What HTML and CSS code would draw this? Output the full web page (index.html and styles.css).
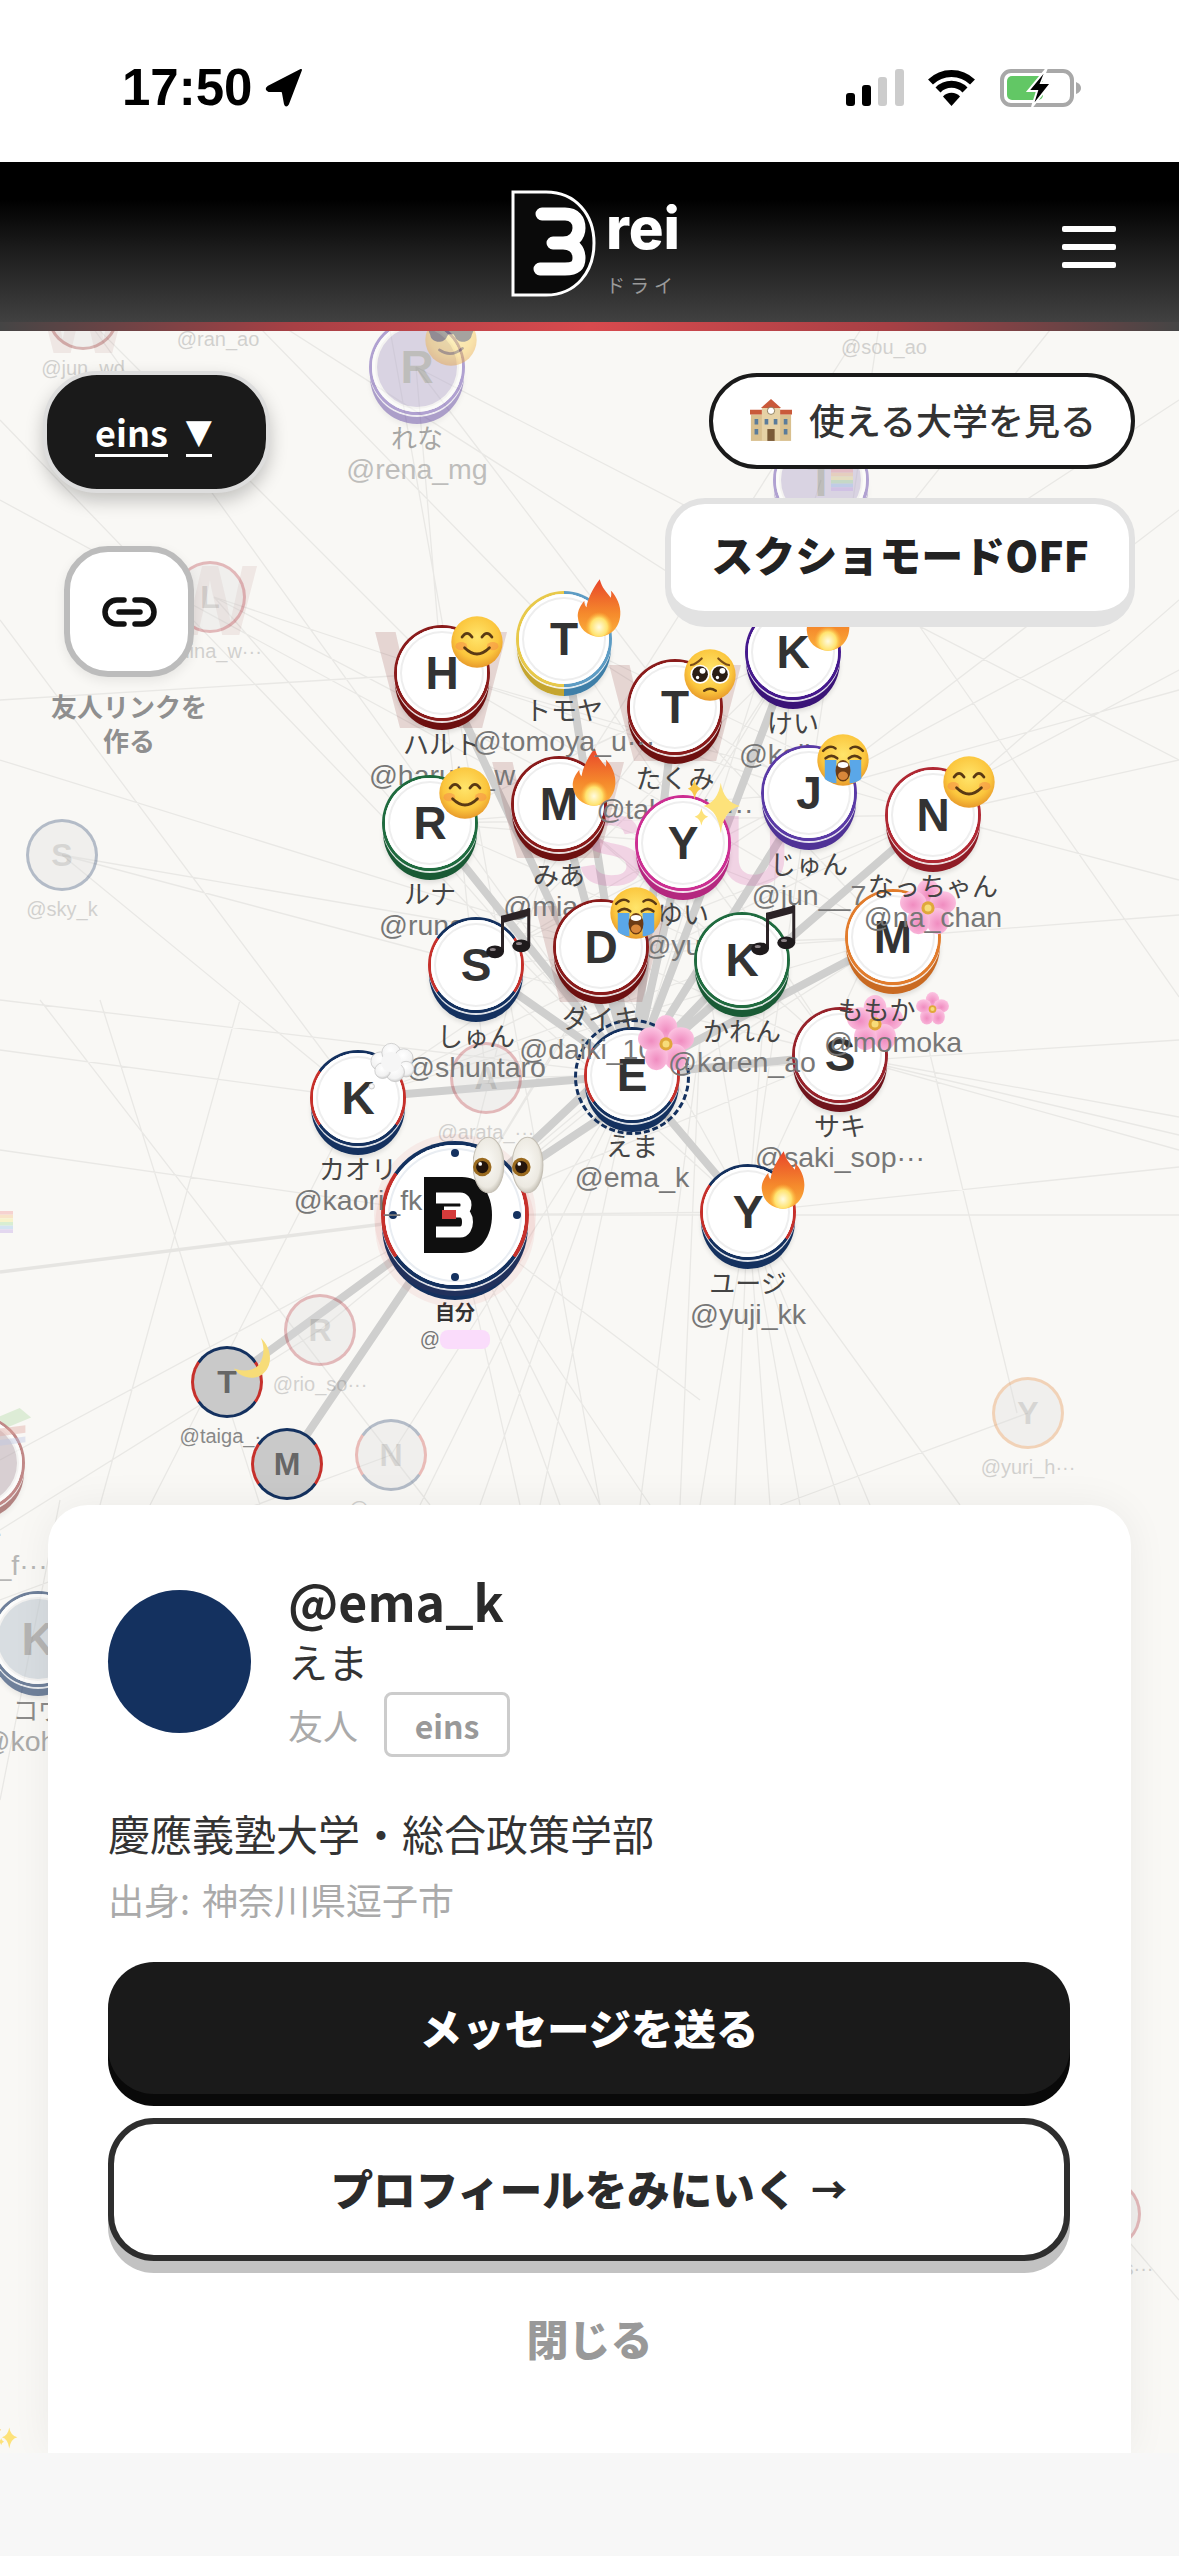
FILE: index.html
```html
<!DOCTYPE html>
<html lang="ja">
<head>
    <meta charset="utf-8">
    <title>Drei</title>
    <link rel="stylesheet" href="styles.css">
</head>
<body>
    <!-- emoji drawn once, used by every node -->
    <svg class="defs" width="0" height="0">
        <defs>
            <radialGradient id="faceGrad" cx="50%" cy="40%" r="60%">
                <stop offset="0" stop-color="#ffe56b"/>
                <stop offset=".7" stop-color="#fbc63d"/>
                <stop offset="1" stop-color="#e89a2b"/>
            </radialGradient>
            <linearGradient id="flameGrad" x1="0" y1="0" x2="0" y2="1">
                <stop offset="0" stop-color="#e8452a"/>
                <stop offset=".6" stop-color="#f58a2c"/>
                <stop offset="1" stop-color="#fbb13c"/>
            </linearGradient>
            <radialGradient id="flameCore" cx="50%" cy="72%" r="45%">
                <stop offset="0" stop-color="#fffbe0"/>
                <stop offset=".6" stop-color="#ffe36e"/>
                <stop offset="1" stop-color="#ffb83c" stop-opacity="0"/>
            </radialGradient>
            <radialGradient id="petalGrad" cx="50%" cy="60%" r="60%">
                <stop offset="0" stop-color="#f08cc0"/>
                <stop offset="1" stop-color="#fcc4e2"/>
            </radialGradient>
            <radialGradient id="eyeGrad" cx="45%" cy="45%" r="60%">
                <stop offset="0" stop-color="#fbfaf6"/>
                <stop offset=".75" stop-color="#ece9e1"/>
                <stop offset="1" stop-color="#bdb8ac"/>
            </radialGradient>
            <radialGradient id="cloudGrad" cx="45%" cy="35%" r="70%">
                <stop offset="0" stop-color="#ffffff"/>
                <stop offset=".7" stop-color="#f2f2f2"/>
                <stop offset="1" stop-color="#c4c4c4"/>
            </radialGradient>
            <symbol id="e-smile" viewBox="0 0 64 64">
                <circle cx="32" cy="32" r="31" fill="url(#faceGrad)"/>
                <ellipse cx="13" cy="37" rx="7" ry="5" fill="#f58a4a" opacity=".5"/>
                <ellipse cx="51" cy="37" rx="7" ry="5" fill="#f58a4a" opacity=".5"/>
                <path d="M14 26q6-9 12 0M38 26q6-9 12 0" fill="none" stroke="#5a3a14" stroke-width="3.4" stroke-linecap="round"/>
                <path d="M17 39q15 15 30 0" fill="none" stroke="#5a3a14" stroke-width="3.4" stroke-linecap="round"/>
            </symbol>
            <symbol id="e-plead" viewBox="0 0 64 64">
                <circle cx="32" cy="32" r="31" fill="url(#faceGrad)"/>
                <path d="M9 20q6-1 13-8M55 20q-6-1-13-8" fill="none" stroke="#7a4d18" stroke-width="2.6" stroke-linecap="round"/>
                <circle cx="20" cy="31" r="11.5" fill="#fff"/>
                <circle cx="44" cy="31" r="11.5" fill="#fff"/>
                <circle cx="20" cy="31" r="9.5" fill="#2b1d14"/>
                <circle cx="44" cy="31" r="9.5" fill="#2b1d14"/>
                <circle cx="23" cy="27" r="3.6" fill="#fff"/>
                <circle cx="47" cy="27" r="3.6" fill="#fff"/>
                <circle cx="17" cy="35" r="2" fill="#fff"/>
                <circle cx="41" cy="35" r="2" fill="#fff"/>
                <path d="M25 51q7-5 14 0" fill="none" stroke="#5a3a14" stroke-width="3" stroke-linecap="round"/>
            </symbol>
            <symbol id="e-sob" viewBox="0 0 64 64">
                <circle cx="32" cy="32" r="31" fill="url(#faceGrad)"/>
                <path d="M8 21q8-8 15-3M56 21q-8-8-15-3" fill="none" stroke="#5a3a14" stroke-width="3" stroke-linecap="round"/>
                <path d="M11 30q7-6 14 0M39 30q7-6 14 0" fill="none" stroke="#5a3a14" stroke-width="3.2" stroke-linecap="round"/>
                <path d="M10 32h14v28q-8 0-14-5zM40 32h14v23q-6 5-14 5z" fill="#5aa7e8"/>
                <ellipse cx="32" cy="45" rx="9" ry="13" fill="#6b3b15"/>
                <ellipse cx="32" cy="38" rx="6.5" ry="3.6" fill="#fff"/>
                <ellipse cx="32" cy="51" rx="6" ry="5" fill="#d9873a"/>
            </symbol>
            <symbol id="e-cool" viewBox="0 0 64 64">
                <circle cx="32" cy="32" r="31" fill="url(#faceGrad)"/>
                <path d="M5 21h54l-2 5c-1 10-17 11-20 2l-2-3h-6l-2 3c-3 9-19 8-20-2z" fill="#2a2320"/>
                <path d="M18 44q14 10 28-2" fill="none" stroke="#5a3a14" stroke-width="3.2" stroke-linecap="round"/>
            </symbol>
            <symbol id="e-fire" viewBox="0 0 64 80">
                <path d="M33 1c3 12 9 17 15 25 1-4 1-7 0-10 8 8 14 21 13 33C60 68 47 79 32 79 16 79 4 68 3 51c0-8 4-15 9-21 0 4 1 7 3 9C17 26 24 13 33 1z" fill="url(#flameGrad)"/>
                <ellipse cx="32" cy="56" rx="21" ry="23" fill="url(#flameCore)"/>
            </symbol>
            <symbol id="e-notes" viewBox="0 0 64 72">
                <path d="M21 13 58 3v10L21 23z" fill="#2b2326"/>
                <rect x="20" y="13" width="4" height="48" fill="#2b2326"/>
                <rect x="55" y="3" width="4" height="50" fill="#2b2326"/>
                <ellipse cx="12" cy="61" rx="12" ry="8.5" fill="#1e1a1c"/>
                <ellipse cx="47" cy="53" rx="12" ry="8.5" fill="#1e1a1c"/>
                <ellipse cx="9" cy="58" rx="4" ry="2" fill="#8d8488"/>
                <ellipse cx="44" cy="50" rx="4" ry="2" fill="#8d8488"/>
            </symbol>
            <symbol id="e-spark" viewBox="0 0 64 64">
                <path d="M40 6q3 20 20 24q-17 4-20 28q-3-24-18-28q15-4 18-24z" fill="#fde27a"/>
                <path d="M13 2q1 8 7 10q-6 2-7 11q-1-9-7-11q6-2 7-11z" fill="#f9c949"/>
                <path d="M20 32q1 7 7 9q-6 2-7 9q-1-7-7-9q6-2 7-9z" fill="#fde27a"/>
            </symbol>
            <symbol id="e-blossom" viewBox="0 0 64 64">
                <g fill="url(#petalGrad)">
                    <ellipse cx="32" cy="15" rx="13" ry="15"/>
                    <ellipse cx="49" cy="27" rx="15" ry="13"/>
                    <ellipse cx="43" cy="48" rx="13" ry="15"/>
                    <ellipse cx="21" cy="48" rx="13" ry="15"/>
                    <ellipse cx="15" cy="27" rx="15" ry="13"/>
                </g>
                <circle cx="32" cy="33" r="7.5" fill="#e0a83a"/>
                <circle cx="32" cy="33" r="4" fill="#f7dc7a"/>
            </symbol>
            <symbol id="e-cloud" viewBox="0 0 64 60">
                <g fill="url(#cloudGrad)" stroke="#c8c8c8" stroke-width="1">
                    <circle cx="6" cy="56" r="3.5"/>
                    <circle cx="17" cy="24" r="12"/>
                    <circle cx="31" cy="13" r="12"/>
                    <circle cx="47" cy="20" r="12"/>
                    <circle cx="50" cy="34" r="10"/>
                    <circle cx="36" cy="38" r="12"/>
                    <circle cx="20" cy="36" r="10"/>
                </g>
                <circle cx="31" cy="25" r="13" fill="#f6f6f6"/>
            </symbol>
            <symbol id="e-eyes" viewBox="0 0 70 56">
                <ellipse cx="15" cy="28" rx="15" ry="27" fill="url(#eyeGrad)" stroke="#c4bfb4"/>
                <ellipse cx="53" cy="28" rx="15" ry="27" fill="url(#eyeGrad)" stroke="#c4bfb4"/>
                <circle cx="9" cy="30" r="9" fill="#9a6a1f"/>
                <circle cx="47" cy="30" r="9" fill="#9a6a1f"/>
                <circle cx="9" cy="30" r="6" fill="#24150c"/>
                <circle cx="47" cy="30" r="6" fill="#24150c"/>
                <circle cx="7" cy="27" r="1.8" fill="#fff"/>
                <circle cx="45" cy="27" r="1.8" fill="#fff"/>
            </symbol>
            <symbol id="e-moon" viewBox="0 0 48 48">
                <path d="M32 1C45 13 46 34 33 43 22 50 8 46 1 36c11 4 23 3 29-5 6-9 6-20 2-30z" fill="#f7dc78"/>
            </symbol>
            <symbol id="e-school" viewBox="0 0 46 50">
                <rect x="1" y="20" width="44" height="29" fill="#d9c08f"/>
                <rect x="13" y="12" width="20" height="37" fill="#e6d2a6"/>
                <path d="M0 20h13v-5H0zM33 15h13v5H33zM12 13 23 3l11 10z" fill="#c9593a"/>
                <circle cx="23" cy="16" r="4" fill="#fff" stroke="#8a7a58"/>
                <path d="M5 25h4v6H5zM5 36h4v6H5zM37 25h4v6h-4zM37 36h4v6h-4zM16 25h4v6h-4zM26 25h4v6h-4z" fill="#5b7c9a"/>
                <rect x="19" y="36" width="8" height="13" fill="#7a5a38"/>
            </symbol>
            <symbol id="e-flag" viewBox="0 0 30 30">
                <rect width="30" height="5" fill="#f29a9a"/>
                <rect y="5" width="30" height="5" fill="#f7c88a"/>
                <rect y="10" width="30" height="5" fill="#f5ee8f"/>
                <rect y="15" width="30" height="5" fill="#a8e0a0"/>
                <rect y="20" width="30" height="5" fill="#9cc4ee"/>
                <rect y="25" width="30" height="5" fill="#c4a8e8"/>
            </symbol>
            <symbol id="e-books" viewBox="0 0 40 46">
                <path d="M2 12 26 2l12 10-24 10z" fill="#b5dca8"/>
                <path d="M2 24l30-4v8L2 32z" fill="#e0a59d"/>
                <path d="M2 36l30-4v6L2 42z" fill="#bcc6e4"/>
            </symbol>
        </defs>
    </svg>

    <header class="status-bar">
        <div class="status-left">
            <span class="clock">17:50</span>
            <svg class="loc-arrow" viewBox="0 0 38 39"><path d="M36 2 3 19q-3 2 1 4l12 0q2 0 2 2l2 11q1 3 3 0z" fill="#000" stroke="#000" stroke-width="2" stroke-linejoin="round"/></svg>
        </div>
        <div class="status-right">
            <svg class="signal" viewBox="0 0 58 37">
                <rect x="0" y="24" width="9" height="13" rx="3" fill="#000"/>
                <rect x="16" y="16" width="9" height="21" rx="3" fill="#000"/>
                <rect x="32" y="8" width="9" height="29" rx="3" fill="#ccc"/>
                <rect x="49" y="0" width="9" height="37" rx="3" fill="#ccc"/>
            </svg>
            <svg class="wifi" viewBox="0 0 51 37">
                <path d="M4.500 13A30 30 0 0 1 46.500 13M12 21A19 19 0 0 1 39 21" fill="none" stroke="#000" stroke-width="7"/>
                <path d="M25.500 37 17 27.500A11.500 11.500 0 0 1 34 27.500z" fill="#000"/>
            </svg>
            <svg class="battery" viewBox="0 0 81 39">
                <rect x="2" y="3" width="70" height="34" rx="9" fill="none" stroke="#a8a8a8" stroke-width="4"/>
                <path d="M76 14q5 2 5 6t-5 6z" fill="#a8a8a8"/>
                <rect x="7" y="8" width="36" height="24" rx="5" fill="#62c765"/>
                <path d="M47 0 28 23h9l-5 16 19-24h-10z" fill="#000" stroke="#fff" stroke-width="2"/>
            </svg>
        </div>
    </header>

    <nav class="app-header">
        <div class="brand">
            <svg class="brand-mark" viewBox="0 0 85 107">
                <path d="M2 2H35C65 2 83 25 83 53 83 82 65 105 35 105H2z" fill="#0a0a0a" stroke="#fff" stroke-width="3"/>
                <path d="M31 24H54C64 24 68 30 68 38 68 46 62 53 52 53H42M52 53C63 53 68 60 68 68 68 77 62 79 54 79H29" fill="none" stroke="#fff" stroke-width="13" stroke-linecap="round" stroke-linejoin="round"/>
            </svg>
            <div class="brand-text">
                <span class="brand-name">rei</span>
                <span class="brand-kana">ドライ</span>
            </div>
        </div>
        <div class="menu-btn"><span></span><span></span><span></span></div>
    </nav>

    <main class="map">
        <div class="canvas">
            <svg class="edges" width="1179" height="2556" viewBox="0 0 1179 2556">
                <path class="edge-thin" d="M83 314 632 1075M83 314 442 673M218 285 564 639M218 285 793 652M416 367 442 673M416 367 675 707M416 367 1179 760M821 480 632 1075M884 293 559 804M884 293 809 793M214 597 683 843M214 597 442 673M214 597 632 1075M62 855 476 965M62 855 601 947M62 855 358 1098M0 420 632 1075M0 500 559 804M0 700 442 673M0 620 358 1098M0 760 601 947M0 1000 632 1075M0 1150 455 1215M0 1050 358 1098M0 1460 455 1215M150 1505 358 1098M0 1530 320 1330M0 1600 391 1455M100 1000 260 1505M40 1000 430 1505M240 1000 100 1505M390 330 600 1505M933 815 1179 880M933 815 1179 760M933 815 1179 600M809 793 1179 690M969 782 1179 670M920 627 1179 997M929 1050 1017 1413M840 1055 1179 1117M840 1055 1179 1135M840 1055 1179 1150M893 937 1179 915M748 1212 1179 1167M748 1212 700 1505M748 1212 735 1505M748 1212 770 1505M748 1212 800 1505M748 1212 840 1505M748 1212 870 1505M748 1212 960 1505M1028 1413 780 1505M632 1075 1179 1040M1179 400 793 652M1179 510 809 793M1110 630 793 800M1050 330 793 652M455 1215 520 1505M455 1215 560 1505M455 1215 600 1505M455 1215 650 1505M455 1215 700 1400M455 1215 1179 1215M632 1075 420 1505M632 1075 480 1505M632 1075 540 1505M700 1040 640 1505M700 1040 680 1505M442 673 933 815M442 673 893 937M442 673 809 793M564 639 933 815M564 639 840 1055M564 639 809 793M430 823 933 815M430 823 809 793M430 823 742 960M476 965 893 937M476 965 809 793M476 965 840 1055M559 804 893 937M559 804 742 960M559 804 840 1055M601 947 933 815M601 947 893 937M601 947 840 1055M675 707 476 965M675 707 893 937M675 707 430 823M683 843 476 965M683 843 840 1055M683 843 430 823M793 652 430 823M793 652 476 965M793 652 601 947M793 652 748 1212M809 793 748 1212M933 815 748 1212M933 815 358 1098M893 937 358 1098M809 793 358 1098M742 960 358 1098M683 843 748 1212M601 947 748 1212M476 965 748 1212M559 804 455 1215M683 843 455 1215M793 652 455 1215M933 815 455 1215M893 937 455 1215M840 1055 455 1215M748 1212 455 1215M486 1078 632 1075M486 1078 442 673M320 1330 632 1075M391 1455 632 1075M1105 2214 1179 2300M0 1800 60 1500"/>
                <path class="edge-faint" d="M0 1272 455 1215"/>
                <path class="edge-thick" d="M442 673 632 1075M564 639 632 1075M675 707 632 1075M793 652 632 1075M430 823 632 1075M559 804 632 1075M683 843 632 1075M809 793 632 1075M933 815 632 1075M476 965 632 1075M601 947 632 1075M742 960 632 1075M893 937 632 1075M840 1055 632 1075M358 1098 632 1075M748 1212 632 1075M455 1215 620 1060M455 1215 650 1085M455 1215 227 1382M455 1215 287 1464"/>
            </svg>

            <span class="crest crest-w" style="left:441px;top:680px">W</span>
            <span class="crest crest-w" style="left:675px;top:713px">W</span>
            <span class="crest crest-w" style="left:558px;top:810px">W</span>
            <span class="crest crest-w" style="left:601px;top:954px">W</span>
            <span class="crest crest-w crest-small" style="left:210px;top:600px">W</span>
            <span class="crest crest-w crest-small" style="left:83px;top:318px">W</span>
            <span class="crest crest-sou" style="left:683px;top:850px">SOU</span>

            <!-- people outside the current range -->
            <div class="node node-small node-faded ring-maroon" style="left:83px;top:314px"><span class="disc">J</span><span class="handle">@jun_wd</span></div>
            <div class="node node-small node-faded ring-navy" style="left:218px;top:285px"><span class="disc">R</span><span class="handle">@ran_ao</span></div>
            <div class="node node-small node-faded ring-navy" style="left:884px;top:293px"><span class="disc">S</span><span class="handle">@sou_ao</span></div>
            <div class="node node-rena ring-violet" style="left:417px;top:367px"><span class="disc">R</span><span class="name">れな</span><span class="handle">@rena_mg</span></div>
            <svg class="emoji emoji-faded size-52" style="left:451px;top:340px"><use href="#e-cool"/></svg>
            <div class="node node-rena ring-violet" style="left:821px;top:480px"><span class="disc">T</span></div>
            <svg class="emoji emoji-faded size-flag" style="left:842px;top:480px"><use href="#e-flag"/></svg>
            <div class="node node-small node-faded ring-crimson" style="left:210px;top:597px"><span class="disc">L</span><span class="handle">@hina_w···</span></div>
            <div class="node node-small node-faded ring-navy" style="left:62px;top:855px"><span class="disc">S</span><span class="handle">@sky_k</span></div>
            <div class="node node-small node-faded ring-crimson" style="left:486px;top:1078px"><span class="disc">A</span><span class="handle">@arata_···</span></div>
            <div class="node node-small node-faded ring-crimson" style="left:320px;top:1330px"><span class="disc">R</span><span class="handle">@rio_so···</span></div>
            <div class="node node-small node-faded ring-navy-red" style="left:391px;top:1455px"><span class="disc">N</span><span class="handle">@nao_···</span></div>
            <div class="node node-small node-faded ring-orange" style="left:1028px;top:1413px"><span class="disc">Y</span><span class="handle">@yuri_h···</span></div>
            <div class="node node-small node-faded ring-crimson" style="left:1105px;top:2214px"><span class="disc">M</span><span class="handle">@miki_s···</span></div>
            <div class="node node-small node-faded ring-navy" style="left:-36px;top:1318px"><span class="disc">A</span><span class="handle">@saint</span></div>
            <div class="node node-faded node-riki ring-maroon" style="left:-23px;top:1463px"><span class="disc">R</span><span class="name">リキ</span><span class="handle">@ryuki_f···</span></div>
            <svg class="emoji emoji-faded size-books" style="left:14px;top:1428px"><use href="#e-books"/></svg>
            <div class="node node-faded node-kou ring-navy" style="left:38px;top:1639px"><span class="disc">K</span><span class="name">コウ</span><span class="handle">@kohei_</span></div>
            <svg class="emoji emoji-faded size-flag" style="left:2px;top:1222px"><use href="#e-flag"/></svg>
            <svg class="emoji size-24" style="left:6px;top:2438px"><use href="#e-spark"/></svg>

            <!-- main cluster, later nodes paint over earlier ones -->
            <div class="node node-self ring-navy-red" style="left:455px;top:1215px">
                <span class="disc">
                    <i class="tick tick-top"></i><i class="tick tick-right"></i><i class="tick tick-bottom"></i><i class="tick tick-left"></i>
                    <svg class="self-logo" viewBox="0 0 68 76">
                        <path d="M0 0H38C56 0 68 16 68 38 68 60 56 76 38 76H0z" fill="#0f0f0f"/>
                        <path d="M12 21H36C44 21 44 35 36 35H20M36 35C46 35 46 55 36 55H12" fill="none" stroke="#fff" stroke-width="11" stroke-linejoin="round"/>
                        <rect x="18" y="33" width="14" height="9" fill="#d43b3b"/>
                    </svg>
                </span>
                <span class="name">自分</span>
                <span class="handle">@<i class="blur-name"></i></span>
            </div>
            <svg class="emoji size-eyes" style="left:509px;top:1165px"><use href="#e-eyes"/></svg>

            <div class="node ring-maroon-dark" style="left:840px;top:1055px"><span class="disc">S</span><span class="name">サキ</span><span class="handle">@saki_sop···</span></div>
            <svg class="emoji size-56" style="left:875px;top:1023px"><use href="#e-blossom"/></svg>

            <div class="node ring-orange" style="left:893px;top:937px"><span class="disc">M</span><span class="name">ももか<svg class="name-emoji"><use href="#e-blossom"/></svg></span><span class="handle">@momoka</span></div>
            <svg class="emoji size-56" style="left:928px;top:907px"><use href="#e-blossom"/></svg>

            <div class="node ring-maroon" style="left:442px;top:673px"><span class="disc">H</span><span class="name">ハルト</span><span class="handle">@haruto_w</span></div>
            <svg class="emoji size-52" style="left:477px;top:642px"><use href="#e-smile"/></svg>

            <div class="node ring-maroon" style="left:559px;top:804px"><span class="disc">M</span><span class="name">みあ</span><span class="handle">@mia_w</span></div>
            <svg class="emoji size-fire" style="left:594px;top:777px"><use href="#e-fire"/></svg>

            <div class="node ring-maroon" style="left:675px;top:707px"><span class="disc">T</span><span class="name">たくみ</span><span class="handle">@takumi_···</span></div>
            <svg class="emoji size-52" style="left:710px;top:675px"><use href="#e-plead"/></svg>

            <div class="node ring-gold-blue" style="left:564px;top:639px"><span class="disc">T</span><span class="name">トモヤ</span><span class="handle">@tomoya_u···</span></div>
            <svg class="emoji size-fire" style="left:599px;top:608px"><use href="#e-fire"/></svg>

            <div class="node ring-purple" style="left:793px;top:652px"><span class="disc">K</span><span class="name">けい</span><span class="handle">@keii_w</span></div>
            <svg class="emoji size-fire" style="left:828px;top:622px"><use href="#e-fire"/></svg>

            <div class="node ring-violet" style="left:809px;top:793px"><span class="disc">J</span><span class="name">じゅん</span><span class="handle">@jun__7</span></div>
            <svg class="emoji size-52" style="left:843px;top:760px"><use href="#e-sob"/></svg>

            <div class="node ring-pink" style="left:683px;top:843px"><span class="disc">Y</span><span class="name">ゆい</span><span class="handle">@yui_</span></div>
            <svg class="emoji size-60" style="left:713px;top:808px"><use href="#e-spark"/></svg>

            <div class="node ring-green" style="left:430px;top:823px"><span class="disc">R</span><span class="name">ルナ</span><span class="handle">@runa_</span></div>
            <svg class="emoji size-52" style="left:465px;top:793px"><use href="#e-smile"/></svg>

            <div class="node ring-navy-red" style="left:476px;top:965px"><span class="disc">S</span><span class="name">しゅん</span><span class="handle">@shuntaro</span></div>
            <svg class="emoji size-notes" style="left:510px;top:933px"><use href="#e-notes"/></svg>

            <div class="node ring-navy-red" style="left:358px;top:1098px"><span class="disc">K</span><span class="name">カオリ</span><span class="handle">@kaori_fk</span></div>
            <svg class="emoji size-cloud" style="left:392px;top:1066px"><use href="#e-cloud"/></svg>

            <div class="dash-ring" style="left:632px;top:1077px"></div>
            <div class="node ring-navy-red" style="left:632px;top:1075px"><span class="disc">E</span><span class="name">えま</span><span class="handle">@ema_k</span></div>

            <div class="node ring-maroon" style="left:601px;top:947px"><span class="disc">D</span><span class="name">ダイキ</span><span class="handle">@daiki_10···</span></div>
            <svg class="emoji size-52" style="left:636px;top:913px"><use href="#e-sob"/></svg>
            <svg class="emoji size-56" style="left:666px;top:1043px"><use href="#e-blossom"/></svg>

            <div class="node ring-green" style="left:742px;top:960px"><span class="disc">K</span><span class="name">かれん</span><span class="handle">@karen_ao</span></div>
            <svg class="emoji size-notes" style="left:775px;top:930px"><use href="#e-notes"/></svg>

            <div class="node ring-crimson" style="left:933px;top:815px"><span class="disc">N</span><span class="name">なっちゃん</span><span class="handle">@na_chan</span></div>
            <svg class="emoji size-52" style="left:969px;top:782px"><use href="#e-smile"/></svg>

            <div class="node ring-navy-red" style="left:748px;top:1212px"><span class="disc">Y</span><span class="name">ユージ</span><span class="handle">@yuji_kk</span></div>
            <svg class="emoji size-fire" style="left:783px;top:1180px"><use href="#e-fire"/></svg>

            <div class="node node-small node-dim ring-navy-red" style="left:227px;top:1382px"><span class="disc">T</span><span class="handle">@taiga_···</span></div>
            <svg class="emoji size-moon" style="left:254px;top:1358px"><use href="#e-moon"/></svg>
            <div class="node node-small node-dim ring-navy-red" style="left:287px;top:1464px"><span class="disc">M</span></div>
        </div>

        <div class="overlay-left">
            <button class="range-btn"><span class="range-word">eins</span><span class="range-arrow">▼</span></button>
            <div class="invite">
                <div class="invite-btn">
                    <svg class="link-icon" viewBox="0 0 55 30"><path d="M22 3H15a12 12 0 0 0 0 24H22M33 3H40a12 12 0 0 1 0 24H33M17 15H38" fill="none" stroke="#111" stroke-width="5.500" stroke-linecap="round"/></svg>
                </div>
                <p class="invite-label">友人リンクを<br>作る</p>
            </div>
        </div>

        <div class="overlay-right">
            <button class="uni-btn"><svg class="uni-icon"><use href="#e-school"/></svg>使える大学を見る</button>
            <button class="shot-btn">スクショモードOFF</button>
        </div>

        <section class="sheet">
            <div class="sheet-head">
                <div class="avatar"></div>
                <div class="sheet-info">
                    <div class="sheet-handle">@ema_k</div>
                    <div class="sheet-name">えま</div>
                    <div class="sheet-meta"><span>友人</span><span class="tag">eins</span></div>
                </div>
            </div>
            <p class="school">慶應義塾大学・総合政策学部</p>
            <p class="origin">出身: 神奈川県逗子市</p>
            <button class="btn-primary">メッセージを送る</button>
            <button class="btn-outline">プロフィールをみにいく<span class="btn-arrow">→</span></button>
            <button class="btn-close">閉じる</button>
        </section>
    </main>

    <div class="home-bar"></div>
</body>
</html>
```

FILE: styles.css
```css
* {
    box-sizing: border-box;
}

html, body {
    margin: 0;
    padding: 0;
}

body {
    width: 1179px;
    height: 2556px;
    display: flex;
    flex-direction: column;
    overflow: hidden;
    background-color: #f7f7f7;
    font-family: "Noto Sans CJK JP", "Noto Sans", sans-serif;
    color: #333;
}

button {
    font-family: inherit;
    cursor: pointer;
}

.defs {
    position: absolute;
}

/* status bar */
.status-bar {
    height: 162px;
    flex: none;
    display: flex;
    justify-content: space-between;
    align-items: flex-start;
    padding: 68px 98px 0 122px;
    background-color: #fff;
}

.status-left, .status-right {
    display: flex;
    align-items: center;
    height: 39px;
}

.clock {
    font-family: "Liberation Sans", sans-serif;
    font-weight: 700;
    font-size: 51px;
    line-height: 39px;
    color: #000;
}

.loc-arrow {
    width: 38px;
    height: 39px;
    margin-left: 13px;
}

.signal {
    width: 58px;
    height: 37px;
}

.wifi {
    width: 51px;
    height: 37px;
    margin-left: 22px;
}

.battery {
    width: 81px;
    height: 39px;
    margin-left: 23px;
}

/* app header */
.app-header {
    height: 168px;
    flex: none;
    position: relative;
    z-index: 5;
    display: flex;
    justify-content: center;
    background: linear-gradient(#000 0, #000 22%, #1a1a1a 50%, #454545 100%);
}

.app-header::after {
    content: "";
    position: absolute;
    left: 0;
    right: 0;
    bottom: -1px;
    height: 9px;
    background: linear-gradient(90deg, #454545 0, #a84045 25%, #d84a4e 50%, #a84045 75%, #454545 100%);
}

.brand {
    display: flex;
    align-items: flex-start;
    padding: 28px 0 0 12px;
    gap: 10px;
}

.brand-mark {
    width: 85px;
    height: 107px;
}

.brand-text {
    display: flex;
    flex-direction: column;
    align-items: flex-start;
    padding-top: 2px;
}

.brand-name {
    font-family: Inter, sans-serif;
    font-weight: 800;
    font-size: 58px;
    line-height: 72px;
    color: #fff;
}

.brand-kana {
    font-size: 19px;
    line-height: 26px;
    letter-spacing: 5px;
    color: #9a9a9a;
    margin-top: 8px;
}

.menu-btn {
    position: absolute;
    left: 1062px;
    top: 64px;
    width: 54px;
    display: flex;
    flex-direction: column;
    gap: 12px;
}

.menu-btn span {
    height: 6px;
    border-radius: 2px;
    background-color: #fff;
}

/* network map */
.map {
    flex: 1;
    position: relative;
    overflow: hidden;
    background-color: #f9f8f5;
}

.canvas {
    position: absolute;
    left: 0;
    top: -330px;
    width: 1179px;
    height: 2556px;
}

.edges {
    position: absolute;
    left: 0;
    top: 0;
}

.edge-thin {
    fill: none;
    stroke: #e9e8e5;
    stroke-width: 1.3;
}

.edge-faint {
    fill: none;
    stroke: #e6e5e2;
    stroke-width: 3.5;
}

.edge-thick {
    fill: none;
    stroke: #cfcfce;
    stroke-width: 8;
}

.crest {
    position: absolute;
    transform: translate(-50%, -50%);
    font-family: "Liberation Sans", sans-serif;
    font-weight: 700;
    line-height: 1;
}

.crest-w {
    font-size: 140px;
    color: rgba(128, 40, 40, 0.17);
}

.crest-small {
    font-size: 100px;
    color: rgba(128, 40, 40, 0.08);
}

.crest-sou {
    font-size: 100px;
    letter-spacing: -2px;
    color: rgba(214, 80, 170, 0.22);
}

/* nodes */
.node {
    position: absolute;
    width: 96px;
    margin-left: -48px;
    margin-top: -48px;
    display: flex;
    flex-direction: column;
    align-items: center;
}

.disc {
    position: relative;
    flex: none;
    width: 96px;
    height: 96px;
    display: flex;
    align-items: center;
    justify-content: center;
    isolation: isolate;
    font-family: "Liberation Sans", sans-serif;
    font-weight: 700;
    font-size: 46px;
    color: #333;
}

.disc::before {
    content: "";
    position: absolute;
    left: 1px;
    right: 1px;
    top: 9px;
    bottom: -9px;
    z-index: -2;
    border-radius: 50%;
    background: var(--lip);
    box-shadow: 0 3px 4px rgba(0, 0, 0, 0.1);
}

.disc::after {
    content: "";
    position: absolute;
    inset: 0;
    z-index: -1;
    border-radius: 50%;
    border: 3px solid transparent;
    background: linear-gradient(var(--face, #fff), var(--face, #fff)) padding-box, var(--ring) border-box;
    box-shadow: inset 0 0 0 3px #fff, inset 0 0 0 5px #eee, 0 2px 0 rgba(255, 255, 255, 0.85);
}

.name {
    margin-top: 7px;
    margin-bottom: 2px;
    display: flex;
    align-items: center;
    font-size: 26px;
    line-height: 30px;
    color: #444;
    white-space: nowrap;
}

.handle {
    font-family: "Liberation Sans", sans-serif;
    font-size: 28.5px;
    line-height: 30px;
    color: #777;
    white-space: nowrap;
}

.name-emoji {
    width: 33px;
    height: 33px;
}

.ring-maroon { --ring: linear-gradient(#8a1b1b, #8a1b1b); --lip: #6d1010; }
.ring-maroon-dark { --ring: linear-gradient(#97222a, #97222a); --lip: #6f141c; }
.ring-crimson { --ring: linear-gradient(#b02833, #b02833); --lip: #8f1c26; }
.ring-green { --ring: linear-gradient(#1f6b3f, #1f6b3f); --lip: #195a35; }
.ring-purple { --ring: linear-gradient(#45198d, #45198d); --lip: #3a1477; }
.ring-violet { --ring: linear-gradient(#5a3aa6, #5a3aa6); --lip: #4f3296; }
.ring-pink { --ring: linear-gradient(#cc2e92, #cc2e92); --lip: #b4287f; }
.ring-orange { --ring: linear-gradient(#e27c2c, #e27c2c); --lip: #c96a22; }
.ring-navy { --ring: linear-gradient(#14315f, #14315f); --lip: #14315f; }
.ring-navy-red {
    --ring: conic-gradient(#14315f 0 55deg, #c6302b 55deg 125deg, #14315f 125deg 235deg, #c6302b 235deg 305deg, #14315f 305deg);
    --lip: #14315f;
}
.ring-gold-blue {
    --ring: conic-gradient(#5d9cc4 0 180deg, #e8c94a 180deg);
    --lip: linear-gradient(90deg, #c4a52f 50%, #3f7fa8 50%);
}

.node-small {
    width: 72px;
    margin-left: -36px;
    margin-top: -36px;
}

.node-small .disc {
    width: 72px;
    height: 72px;
    font-size: 32px;
}

.node-small .disc::before {
    display: none;
}

.node-small .disc::after {
    box-shadow: none;
}

.node-small .handle {
    margin-top: 6px;
    font-size: 20px;
    line-height: 24px;
}

.node-faded {
    --face: #dcdcdc;
    opacity: 0.3;
}

.node-faded .disc {
    color: #888;
}

.node-rena {
    --face: #b4a8cc;
    opacity: 0.45;
}

.node-rena .disc {
    color: #777;
}

.node-kou {
    --face: #c3ccd4;
    opacity: 0.6;
}

.node-riki {
    --face: #b8a8b0;
    opacity: 0.5;
}

.node-dim {
    --face: #c9c9c9;
}

.node-dim .disc {
    color: #666;
}

.node-dim .handle {
    color: #888;
}

.node-self {
    width: 148px;
    margin-left: -74px;
    margin-top: -74px;
}

.node-self .disc {
    width: 148px;
    height: 148px;
}

.node-self .disc::before {
    top: 11px;
    bottom: -11px;
    box-shadow: 0 0 0 7px rgba(212, 59, 59, 0.07);
}

.node-self .disc::after {
    border-width: 4px;
    box-shadow: inset 0 0 0 3px #fff, inset 0 0 0 5px #e9edf2, 0 2px 0 rgba(255, 255, 255, 0.85), 0 0 0 7px rgba(212, 59, 59, 0.07);
}

.node-self .name {
    margin-top: 10px;
    margin-bottom: 0;
    font-size: 20px;
    line-height: 26px;
    font-weight: 700;
    color: #333;
}

.node-self .handle {
    display: flex;
    align-items: center;
    margin-top: 2px;
    font-size: 20px;
    line-height: 24px;
}

.blur-name {
    display: block;
    width: 50px;
    height: 19px;
    border-radius: 8px;
    background-color: #fadcfb;
}

.self-logo {
    width: 68px;
    height: 76px;
    margin-left: 5px;
}

.tick {
    position: absolute;
    width: 8px;
    height: 8px;
    border-radius: 50%;
    background-color: #14315f;
}

.tick-top { left: 70px; top: 8px; }
.tick-bottom { left: 70px; top: 132px; }
.tick-left { left: 8px; top: 70px; }
.tick-right { left: 132px; top: 70px; }

.dash-ring {
    position: absolute;
    width: 116px;
    height: 116px;
    margin-left: -58px;
    margin-top: -58px;
    border-radius: 50%;
    border: 3px dashed #14315f;
}

/* emoji badges on the canvas */
.emoji {
    position: absolute;
    transform: translate(-50%, -50%);
    overflow: visible;
}

.emoji-faded {
    opacity: 0.4;
}

.size-52 { width: 53px; height: 53px; }
.size-56 { width: 56px; height: 56px; }
.size-60 { width: 62px; height: 62px; }
.size-24 { width: 26px; height: 26px; }
.size-fire { width: 47px; height: 59px; }
.size-notes { width: 48px; height: 55px; }
.size-cloud { width: 50px; height: 48px; }
.size-eyes { width: 72px; height: 58px; }
.size-moon { width: 42px; height: 44px; }
.size-flag { width: 22px; height: 24px; }
.size-books { width: 38px; height: 44px; }

/* floating controls */
.overlay-left {
    position: absolute;
    left: 43px;
    top: 41px;
    display: flex;
    flex-direction: column;
    align-items: flex-start;
}

.range-btn {
    width: 227px;
    height: 122px;
    display: flex;
    align-items: center;
    justify-content: center;
    gap: 18px;
    padding: 0 6px 0 0;
    border: 4px solid #ddd;
    border-radius: 54px;
    background-color: #1a1a1a;
    box-shadow: 0 8px 18px rgba(0, 0, 0, 0.22);
    color: #fff;
    font-size: 36px;
    font-weight: 700;
}

.range-word, .range-arrow {
    line-height: 46px;
    border-bottom: 3px solid #fff;
}

.range-arrow {
    font-family: "DejaVu Sans", sans-serif;
    font-size: 34px;
}

.invite {
    width: 168px;
    margin: 53px 0 0 2px;
    display: flex;
    flex-direction: column;
    align-items: center;
}

.invite-btn {
    width: 130px;
    height: 131px;
    display: flex;
    align-items: center;
    justify-content: center;
    border: 6px solid #bcbcbc;
    border-radius: 44px;
    background-color: #fff;
    box-shadow: 0 4px 12px rgba(0, 0, 0, 0.08);
}

.link-icon {
    width: 55px;
    height: 30px;
}

.invite-label {
    margin: 12px 0 0;
    text-align: center;
    font-size: 26px;
    line-height: 34px;
    font-weight: 700;
    color: #8f8f8f;
    white-space: nowrap;
}

.overlay-right {
    position: absolute;
    right: 44px;
    top: 43px;
    display: flex;
    flex-direction: column;
    align-items: flex-end;
    gap: 29px;
}

.uni-btn {
    width: 426px;
    height: 96px;
    display: flex;
    align-items: center;
    gap: 17px;
    padding: 0 0 4px 37px;
    border: 4px solid #1a1a1a;
    border-radius: 48px;
    background-color: #fff;
    color: #333;
    font-size: 36px;
    font-weight: 500;
}

.uni-icon {
    width: 42px;
    height: 46px;
}

.shot-btn {
    width: 470px;
    height: 129px;
    padding: 0 0 8px;
    border: 6px solid #e2e2e2;
    border-bottom-width: 16px;
    border-radius: 40px;
    background-color: #fff;
    color: #222;
    font-size: 42px;
    font-weight: 900;
}

/* bottom sheet */
.sheet {
    position: absolute;
    left: 48px;
    right: 48px;
    bottom: 0;
    height: 948px;
    padding: 60px 60px 0;
    display: flex;
    flex-direction: column;
    border-radius: 40px 40px 0 0;
    background-color: #fff;
    box-shadow: 0 0 40px rgba(0, 0, 0, 0.06);
}

.sheet-head {
    display: flex;
    gap: 37px;
}

.avatar {
    width: 143px;
    height: 143px;
    margin-top: 25px;
    border-radius: 50%;
    background-color: #14315f;
}

.sheet-handle {
    font-size: 50px;
    line-height: 70px;
    font-weight: 700;
    color: #2b2b2b;
}

.sheet-name {
    margin-top: 6px;
    font-size: 40px;
    line-height: 40px;
    color: #333;
}

.sheet-meta {
    display: flex;
    align-items: center;
    gap: 26px;
    margin-top: 11px;
    font-size: 35px;
    color: #aaa;
}

.tag {
    width: 126px;
    height: 65px;
    display: flex;
    align-items: center;
    justify-content: center;
    border: 3px solid #ccc;
    border-radius: 8px;
    font-size: 32px;
    font-weight: 700;
    color: #999;
}

.school {
    margin: 46px 0 0;
    font-size: 42px;
    line-height: 60px;
    color: #333;
    white-space: nowrap;
}

.origin {
    margin: 11px 0 0;
    font-size: 36px;
    line-height: 50px;
    word-spacing: 4px;
    color: #aaa;
}

.btn-primary, .btn-outline {
    flex: none;
    width: 962px;
    padding: 0 0 4px;
    border-radius: 46px;
    font-size: 42.5px;
    font-weight: 900;
}

.btn-primary {
    height: 132px;
    margin-top: 38px;
    border: none;
    background-color: #1a1a1a;
    box-shadow: 0 12px 0 #090909;
    color: #fff;
}

.btn-outline {
    height: 143px;
    margin-top: 24px;
    display: flex;
    align-items: center;
    justify-content: center;
    gap: 14px;
    border: 6px solid #2e2e2e;
    background-color: #fff;
    box-shadow: 0 12px 0 #c2c2c2;
    color: #2b2b2b;
}

.btn-arrow {
    font-size: 36px;
}

.btn-close {
    margin-top: 47px;
    padding: 0;
    height: 60px;
    border: none;
    background: none;
    font-size: 42px;
    font-weight: 900;
    line-height: 60px;
    color: #999;
}

.home-bar {
    height: 103px;
    flex: none;
    position: relative;
    background-color: #f7f7f7;
}
```
